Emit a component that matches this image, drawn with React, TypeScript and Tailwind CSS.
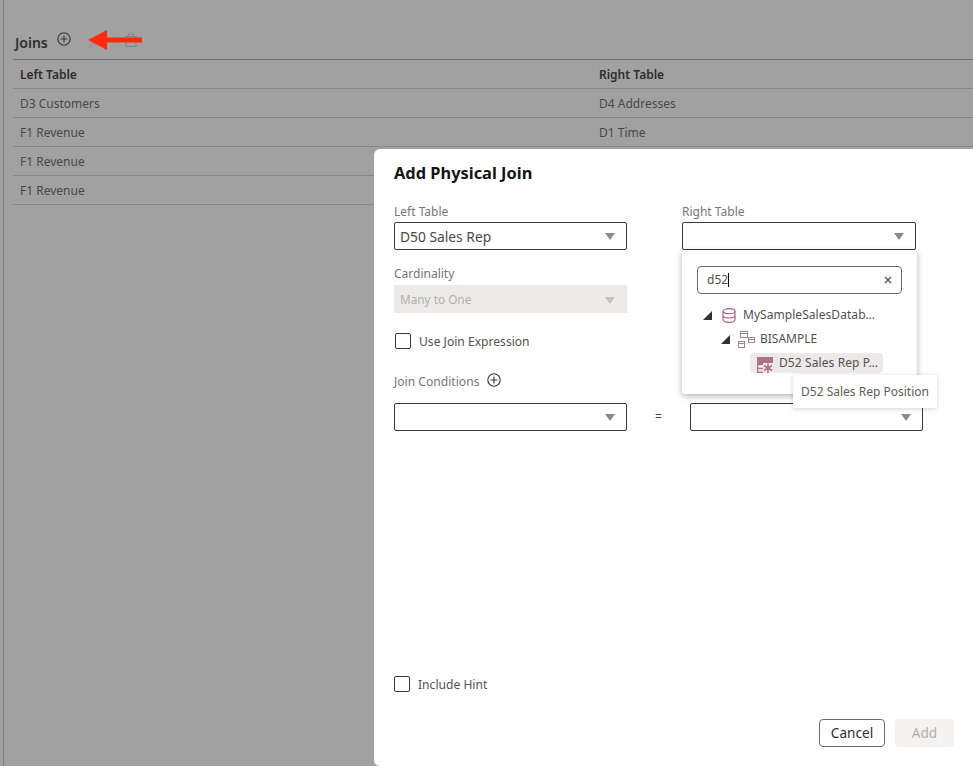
import React from "react";

const font = { fontFamily: '"Noto Sans", sans-serif' };

function Caret({ className = "fill-[#8a8a8a]" }: { className?: string }) {
  return (
    <svg width="10" height="7" viewBox="0 0 10 7" className={className}>
      <path d="M0 0h10L5 7z" />
    </svg>
  );
}

function PlusCircle({ size = 14 }: { size?: number }) {
  return (
    <svg width={size} height={size} viewBox="0 0 14 14" fill="none" stroke="#333" strokeWidth="1.1">
      <circle cx="7" cy="7" r="6.2" />
      <path d="M7 3.6v6.8M3.6 7h6.8" />
    </svg>
  );
}

function Select({ value, w = "w-[233px]" }: { value?: string; w?: string }) {
  return (
    <div className={`${w} h-7 shrink-0 flex items-center justify-between pl-[5px] pr-[11px] bg-white border border-[#3a3838] rounded-[2px] text-[13.8px] text-[#4a4846]`}>
      <span className="pt-[2px]">{value}</span>
      <Caret />
    </div>
  );
}

function Check({ label, indent }: { label: string; indent?: boolean }) {
  return (
    <div className={`flex items-center gap-[8px] ${indent ? "pl-px" : ""}`}>
      <div className="w-4 h-4 bg-white border border-[#3a3838] rounded-[2px]" />
      <span className="text-[12.1px] leading-[16px] pt-[2px] text-[#54524f]">{label}</span>
    </div>
  );
}

function Row({ left, right, bold }: { left: string; right: string; bold?: boolean }) {
  return (
    <div className={`h-[29px] flex items-center pt-[2px] border-b border-[#868686] text-[12px] ${bold ? "font-semibold text-[#2e2d2c]" : "text-[#4a4846]"}`}>
      <span className="w-[586px] pl-[7px]">{left}</span>
      <span>{right}</span>
    </div>
  );
}

function Tree() {
  return (
    <div className="mt-[9px] flex flex-col text-[12px] text-[#54524f]">
      <div className="h-6 flex items-center pl-[21px] gap-[10px]">
        <svg width="9" height="9" viewBox="0 0 9 9" className="fill-[#333]"><path d="M9 0v9H0z" /></svg>
        <svg width="14" height="15" viewBox="0 0 14 15" fill="none" stroke="#a86a7e" strokeWidth="1.2">
          <ellipse cx="7" cy="3.2" rx="6" ry="2.5" />
          <path d="M1 3.2v8.600c0 1.400 2.700 2.500 6 2.500s6-1.100 6-2.500V3.200M1 7.500c0 1.400 2.700 2.500 6 2.500s6-1.100 6-2.500" />
        </svg>
        <span className="ml-[-3px] tracking-[0.05px]">MySampleSalesDatab…</span>
      </div>
      <div className="h-6 flex items-center pl-[39px] gap-[8px]">
        <svg width="9" height="9" viewBox="0 0 9 9" className="fill-[#333]"><path d="M9 0v9H0z" /></svg>
        <svg width="17" height="17" viewBox="0 0 17 17" fill="none" stroke="#b07f90" strokeWidth="1">
          <rect x="2.500" y="0.500" width="7" height="6" />
          <rect x="10.500" y="6.500" width="6" height="5" />
          <rect x="0.500" y="10.500" width="6" height="6" />
          <path d="M2.500 2.500h7M10.500 8.500h6M0.500 12.500h6" />
        </svg>
        <span className="ml-[-3px]">BISAMPLE</span>
      </div>
      <div className="ml-[68px] mt-[2px] w-[133px] h-[20px] flex items-center gap-[6px] pl-[7px] bg-[#ece9e8] rounded-[4px]">
        <svg width="16" height="16" viewBox="0 0 16 16" className="shrink-0 mt-[3px]">
          <rect x="0" y="0" width="16" height="6" fill="#b0708a" />
          <rect x="0" y="6" width="6" height="2" fill="#b0708a" />
          <rect x="0" y="8" width="1.300" height="8" fill="#b0708a" />
          <rect x="0" y="14.700" width="6" height="1.300" fill="#b0708a" />
          <rect x="0" y="10.800" width="6" height="1.300" fill="#b0708a" />
          <path d="M11 6.500v9.500M7 8.500l8 5M15 8.500l-8 5" stroke="#b0708a" strokeWidth="1.600" />
        </svg>
        <span className="whitespace-nowrap tracking-[0.1px]">D52 Sales Rep P…</span>
      </div>
    </div>
  );
}

export default function App() {
  return (
    <div className="relative w-[973px] h-[766px] overflow-hidden bg-[#a1a1a1]" style={font}>
      {/* page under the scrim */}
      <div className="h-full ml-[3px] border-l border-[#7a7a7a] pl-[9px] pt-[30px]">
        <div className="flex items-center h-[30px] pl-[2px] border-b border-[#6e6e6e]">
          <span className="text-[14px] font-semibold text-[#2f2e2d] mb-[4px]">Joins</span>
          <span className="ml-[9px] mb-[12px] flex"><PlusCircle /></span>
          <span className="ml-[17px] mb-[8px] flex">
            <svg width="14" height="14" viewBox="0 0 14 14" fill="none" stroke="#8c8c8c" strokeWidth="1"><path d="M1 13l8-8 2 2-8 8z" /></svg>
          </span>
          <span className="ml-[23px] mb-[10px] flex">
            <svg width="12" height="14" viewBox="0 0 12 14" fill="none" stroke="#858585" strokeWidth="1.100">
              <path d="M0 3.500h12M3.500 3.500V1h5v2.500M1 3.500v10h10v-10M1 8h10" />
            </svg>
          </span>
        </div>
        <Row left="Left Table" right="Right Table" bold />
        <Row left="D3 Customers" right="D4 Addresses" />
        <Row left="F1 Revenue" right="D1 Time" />
        <Row left="F1 Revenue" right="" />
        <Row left="F1 Revenue" right="" />
      </div>

      {/* arrow annotation */}
      <svg width="55" height="20" viewBox="0 0 55 20" className="absolute left-[88px] top-[30px]">
        <path d="M54 7.500H19V0L0 10l19 10v-7.500h35z" fill="#ff2a10" />
      </svg>

      {/* dialog */}
      <div className="absolute left-[374px] top-[149px] w-[620px] h-[617px] bg-white rounded-tl-[6px] rounded-bl-[6px] pl-[20px] pt-[13px]">
        <h2 className="text-[16.400px] leading-[22px] font-bold text-[#161513]">Add Physical Join</h2>

        <div className="mt-[21px] flex">
          <div>
            <div className="text-[12px] leading-[14px] text-[#77757a] mb-[3px]">Left Table</div>
            <Select value="D50 Sales Rep" />
          </div>
          <div className="ml-[55px]">
            <div className="text-[12px] leading-[14px] text-[#77757a] mb-[3px]">Right Table</div>
            <Select w="w-[234px]" />
          </div>
        </div>

        <div className="mt-[17px] text-[12px] leading-[14px] text-[#77757a] mb-[4px]">Cardinality</div>
        <div className="w-[233px] h-7 flex items-center justify-between pl-[6px] pr-[12px] pt-[2px] bg-[#ecebea] text-[11.800px] text-[#b1afad]">
          <span>Many to One</span>
          <Caret className="fill-[#c4c2c0]" />
        </div>

        <div className="mt-[19px]">
          <Check label="Use Join Expression" indent />
        </div>

        <div className="mt-[21px] flex items-center gap-[8px]">
          <span className="text-[12.100px] pt-[2px] text-[#7b7977]">Join Conditions</span>
          <span className="mb-[2px] flex"><PlusCircle /></span>
        </div>

        <div className="mt-[12px] flex items-center">
          <Select />
          <span className="w-[63px] text-center text-[12px] text-[#4a4846]">=</span>
          <Select />
        </div>

        <div className="mt-[244px]">
          <Check label="Include Hint" />
        </div>

        <div className="mt-[26px] w-[560px] flex justify-end gap-[10px]">
          <button className="w-[66px] h-[28px] border border-[#6e6c6a] rounded-[4px] bg-white text-[13.600px] text-[#2f2e2d]">Cancel</button>
          <button className="w-[59px] h-[28px] rounded-[4px] bg-[#f4f3f2] text-[13.600px] text-[#b1afad]">Add</button>
        </div>
      </div>

      {/* dropdown popup */}
      <div className="absolute left-[682px] top-[250px] w-[235px] h-[144px] bg-white rounded-[3px] shadow-[0_2px_6px_rgba(0,0,0,0.3)] pl-[15px] pt-[16px]">
        <div className="w-[205px] h-[28px] flex items-center justify-between pl-[9px] pr-[9px] border border-[#6e6c6a] rounded-[4px] text-[12px] text-[#54524f]">
          <span className="flex items-center">d52<span className="w-px h-[14px] bg-black" /></span>
          <svg width="8" height="8" viewBox="0 0 8 8" stroke="#4a4846" strokeWidth="1.100"><path d="M1 1l6 6M7 1l-6 6" /></svg>
        </div>
        <div className="-ml-[15px]"><Tree /></div>
      </div>

      {/* tooltip */}
      <div className="absolute left-[793px] top-[375px] w-[144px] h-[33px] flex items-center justify-center bg-white shadow-[0_1px_5px_rgba(0,0,0,0.18)] text-[12px] text-[#5f5d5b]">
        D52 Sales Rep Position
      </div>
    </div>
  );
}
